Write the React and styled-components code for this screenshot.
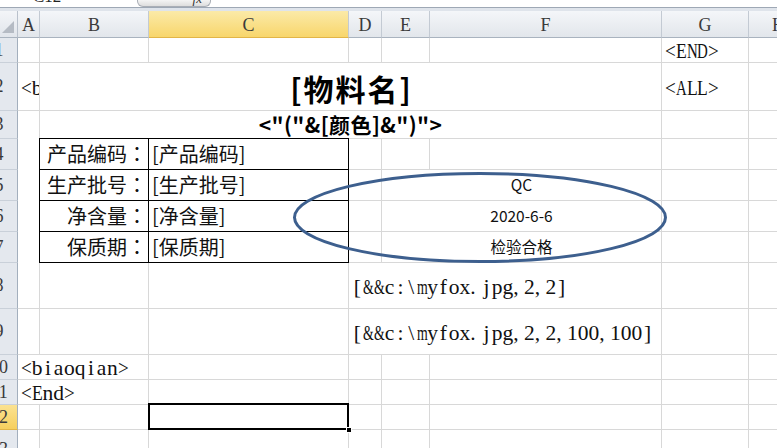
import React from 'react';
import styled, { createGlobalStyle, css } from 'styled-components';

const GRID = '#d8d8d8';
const CJK = '"Noto Sans CJK SC", "Noto Sans", sans-serif';
const SERIF = '"Liberation Serif", "Noto Sans CJK SC", serif';

const COLS = ['A', 'B', 'C', 'D', 'E', 'F', 'G', 'H'];
const ROW_COUNT = 13;
const ACTIVE = { c: 'C', r: 12 };

// Times-metric advance widths (em) for the half-width cells of the template codes
const GLYPH_WIDTH = {
  '[': 0.333, ']': 0.333, '&': 0.778, ':': 0.278, '\\': 0.278, '.': 0.25, ',': 0.25,
  '<': 0.564, '>': 0.564, m: 0.778, f: 0.333, i: 0.278, j: 0.278, a: 0.444, c: 0.444,
  E: 0.611, L: 0.611, N: 0.722, D: 0.722, A: 0.722,
};

// grid column 1 is the row header strip, grid row 1 the column header strip
const colIndex = (c) => COLS.indexOf(c) + 2;
const rowIndex = (r) => r + 1;

const cells = [
  { r: 1, c: 'G', text: '<END>', kind: 'code' },
  { r: 2, c: 'A', text: '<biaoqian>', kind: 'code' },
  { r: 2, c: 'B', span: 5, text: '[物料名]', kind: 'title' },
  { r: 2, c: 'G', text: '<ALL>', kind: 'code' },
  { r: 3, c: 'A', noBottom: true },
  { r: 3, c: 'B', span: 5, text: '<"("&[颜色]&")">', kind: 'sub' },
  { r: 4, c: 'A', noBottom: true },
  { r: 4, c: 'B', text: '产品编码', kind: 'label', table: true },
  { r: 4, c: 'C', text: '[产品编码]', kind: 'value', table: true },
  { r: 5, c: 'A', noBottom: true },
  { r: 5, c: 'B', text: '生产批号', kind: 'label', table: true },
  { r: 5, c: 'C', text: '[生产批号]', kind: 'value', table: true },
  { r: 5, c: 'E', span: 2, text: 'QC', kind: 'stamp' },
  { r: 6, c: 'A', noBottom: true },
  { r: 6, c: 'B', text: '净含量', kind: 'label', table: true },
  { r: 6, c: 'C', text: '[净含量]', kind: 'value', table: true },
  { r: 6, c: 'E', span: 2, text: '2020-6-6', kind: 'stamp' },
  { r: 7, c: 'A', noBottom: true },
  { r: 7, c: 'B', text: '保质期', kind: 'label', table: true },
  { r: 7, c: 'C', text: '[保质期]', kind: 'value', table: true },
  { r: 7, c: 'E', span: 2, text: '检验合格', kind: 'stamp' },
  { r: 8, c: 'D', span: 3, text: '[&&c:\\myfox.jpg,2,2]', kind: 'code' },
  { r: 9, c: 'D', span: 3, text: '[&&c:\\myfox.jpg,2,2,100,100]', kind: 'code' },
  { r: 10, c: 'A', span: 2, text: '<biaoqian>', kind: 'code' },
  { r: 11, c: 'A', span: 2, text: '<End>', kind: 'code' },
];

function buildRow(r) {
  const defs = cells.filter((d) => d.r === r);
  const out = [];
  let i = 0;
  while (i < COLS.length) {
    const c = COLS[i];
    const def = defs.find((d) => d.c === c) || { r, c };
    const span = def.span || 1;
    out.push({ ...def, span, active: ACTIVE.r === r && ACTIVE.c === c });
    i += span;
  }
  return out;
}

const GlobalStyle = createGlobalStyle`
  html, body {
    margin: 0;
    padding: 0;
    background: #fff;
  }
  body {
    overflow: hidden;
  }
  *, *::before, *::after {
    box-sizing: border-box;
  }
`;

const Window = styled.div`
  width: 777px;
  height: 448px;
  overflow: hidden;
  background: #fff;
  display: flex;
  flex-direction: column;
`;

const FormulaBar = styled.div`
  flex: none;
  height: 7px;
  display: flex;
  background: #fff;
`;

const NameBox = styled.div`
  width: 137px;
  height: 7px;
  overflow: hidden;
  padding-left: 33px;
  font-family: ${SERIF};
  font-size: 17px;
  line-height: 14px;
  color: #222;

  span {
    display: block;
    margin-top: -10px;
  }
`;

const FxButton = styled.div`
  width: 74px;
  height: 7px;
  overflow: hidden;
  display: flex;
  justify-content: flex-end;
  padding-right: 8px;
  border: 1px solid #a9aeb6;
  border-top: none;
  border-radius: 0 0 6px 6px;
  background: linear-gradient(#f4f4f4, #dedede);
  font: italic 13px ${SERIF};
  line-height: 10px;
  color: #333;

  span {
    margin-top: -6px;
  }
`;

const Divider = styled.div`
  flex: none;
  height: 4px;
  border-top: 1px solid #9ea8b5;
  background: #dfe4eb;
`;

const Sheet = styled.div`
  position: relative;
  display: grid;
  grid-template-columns: 18px 22px 109px 200px 33px 48px 232px 87px 60px;
  grid-template-rows: 27px 25px 48px 28px 31px 31px 31px 31px 46px 46px 25px 25px 25px 40px;
`;

const Corner = styled.div`
  grid-column: 1;
  grid-row: 1;
  display: flex;
  align-items: flex-end;
  padding: 0 0 3px 1px;
  background: linear-gradient(#f3f5f8, #e1e5eb);
  border-right: 1px solid #b9c1cc;
  border-bottom: 1px solid #a9b3bf;
`;

const ColHead = styled.div`
  grid-column: ${(p) => p.$col};
  grid-row: 1;
  display: flex;
  align-items: center;
  justify-content: center;
  padding-top: 2px;
  font-family: ${SERIF};
  font-size: 18px;
  color: #3a3a3a;
  background: linear-gradient(#f4f6f9, #e2e6eb);
  border-right: 1px solid #c3cad3;
  border-bottom: 1px solid #a9b3bf;

  ${(p) =>
    p.$selected &&
    css`
      background: linear-gradient(#fbeaa8, #f8d66c);
      border-bottom-color: #e2b548;
    `}
`;

const RowHead = styled.div`
  grid-column: 1;
  grid-row: ${(p) => p.$row};
  display: flex;
  align-items: center;
  overflow: hidden;
  font-family: ${SERIF};
  font-size: 18px;
  color: #3a3a3a;
  background: #e4e8ee;
  border-right: 1px solid #a3afbd;
  border-bottom: 1px solid #c9d0d9;

  span {
    flex: none;
    width: 34px;
    margin-left: -18px;
    text-align: center;
  }

  ${(p) =>
    p.$selected &&
    css`
      background: linear-gradient(#fbe291, #f6cf5e);
      border-bottom-color: #e2b548;
    `}
`;

const kindStyles = {
  code: css`
    padding: 4px 0 0 3px;
    font-family: ${SERIF};
    font-size: 21.5px;
    color: #111;
  `,
  title: css`
    justify-content: center;
    padding: 2px 0 0 2px;
    font-family: ${CJK};
    font-size: 30px;
    font-weight: 700;
    letter-spacing: 2px;
    color: #000;
  `,
  sub: css`
    justify-content: center;
    font-family: ${CJK};
    font-size: 21px;
    font-weight: 700;
    letter-spacing: 0.4px;
    color: #000;
  `,
  label: css`
    justify-content: flex-end;
    padding-right: 1px;
    font-family: ${CJK};
    font-size: 20px;
    color: #111;
  `,
  value: css`
    padding-left: 3px;
    font-family: ${CJK};
    font-size: 20px;
    color: #111;
  `,
  stamp: css`
    justify-content: center;
    font-family: ${CJK};
    font-size: 15.5px;
    color: #111;
  `,
};

const Cell = styled.div`
  grid-column: ${(p) => p.$col} / span ${(p) => p.$span};
  grid-row: ${(p) => p.$row};
  min-width: 0;
  display: flex;
  align-items: center;
  overflow: hidden;
  white-space: pre;
  line-height: 1;
  border-right: 1px solid ${(p) => (p.$noRight ? 'transparent' : GRID)};
  border-bottom: 1px solid ${(p) => (p.$noBottom ? 'transparent' : GRID)};
  ${(p) => p.$kind && kindStyles[p.$kind]}
`;

const TableCell = styled(Cell)`
  position: relative;
  z-index: 1;
  margin: -1px 0 0 -1px;
  border: 1px solid #000;
`;

const ActiveCell = styled(Cell)`
  position: relative;
  z-index: 2;
  overflow: visible;

  &::after {
    content: '';
    position: absolute;
    left: -1px;
    top: -2px;
    right: -1px;
    bottom: -1px;
    border: 2px solid #000;
  }

  &::before {
    content: '';
    position: absolute;
    right: -4px;
    bottom: -4px;
    width: 6px;
    height: 6px;
    background: #000;
    border: 1px solid #fff;
    z-index: 1;
  }
`;

// full-width colon, centred in its em box like the sheet's font draws it
const Colon = styled.span`
  font-family: "Noto Sans CJK TC", "Noto Sans CJK SC", sans-serif;
`;

// one half-width cell per character, the way the sheet's CJK font sets Latin text
const Glyph = styled.span`
  display: inline-flex;
  justify-content: ${(p) => (p.$lead ? 'flex-start' : 'center')};
  width: 0.5em;
  transform: scaleX(${(p) => p.$scale});
`;

function HalfWidth({ text }) {
  return (
    <span>
      {Array.from(text).map((ch, i) => {
        const w = GLYPH_WIDTH[ch] || 0.5;
        return (
          <Glyph key={i} $scale={Math.min(1, 0.5 / w).toFixed(3)} $lead={ch === '.' || ch === ','}>
            {ch}
          </Glyph>
        );
      })}
    </span>
  );
}

const ShapeLayer = styled.svg`
  position: absolute;
  left: 290px;
  top: 160px;
  width: 380px;
  height: 96px;
  z-index: 3;
  overflow: visible;
  pointer-events: none;
`;

function SelectAllIcon() {
  return (
    <svg width="14" height="14" viewBox="0 0 14 14">
      <polygon points="1,13 13,1 13,13" fill="#b5bbc4" />
    </svg>
  );
}

function cellContent(cell) {
  if (!cell.text) return null;
  if (cell.kind === 'code') return <HalfWidth text={cell.text} />;
  if (cell.kind === 'label') {
    return (
      <>
        {cell.text}
        <Colon>：</Colon>
      </>
    );
  }
  return cell.text;
}

export default function App() {
  const rows = Array.from({ length: ROW_COUNT }, (_, i) => i + 1);

  return (
    <Window>
      <GlobalStyle />
      <FormulaBar>
        <NameBox>
          <span>C12</span>
        </NameBox>
        <FxButton>
          <span>fx</span>
        </FxButton>
      </FormulaBar>
      <Divider />

      <Sheet>
        <Corner>
          <SelectAllIcon />
        </Corner>
        {COLS.map((c) => (
          <ColHead key={c} $col={colIndex(c)} $selected={c === ACTIVE.c}>
            {c}
          </ColHead>
        ))}

        {rows.map((r) => (
          <React.Fragment key={r}>
            <RowHead $row={rowIndex(r)} $selected={r === ACTIVE.r}>
              <span>{r}</span>
            </RowHead>
            {buildRow(r).map((cell) => {
              const Comp = cell.active ? ActiveCell : cell.table ? TableCell : Cell;
              return (
                <Comp
                  key={cell.c}
                  $col={colIndex(cell.c)}
                  $row={rowIndex(r)}
                  $span={cell.span}
                  $kind={cell.kind}
                  $noRight={cell.noRight}
                  $noBottom={cell.noBottom}
                >
                  {cellContent(cell)}
                </Comp>
              );
            })}
          </React.Fragment>
        ))}

        <ShapeLayer viewBox="0 0 380 96">
          <ellipse cx="190" cy="46.5" rx="185.5" ry="44" fill="none" stroke="#3d5f8e" strokeWidth="3" />
        </ShapeLayer>
      </Sheet>
    </Window>
  );
}
